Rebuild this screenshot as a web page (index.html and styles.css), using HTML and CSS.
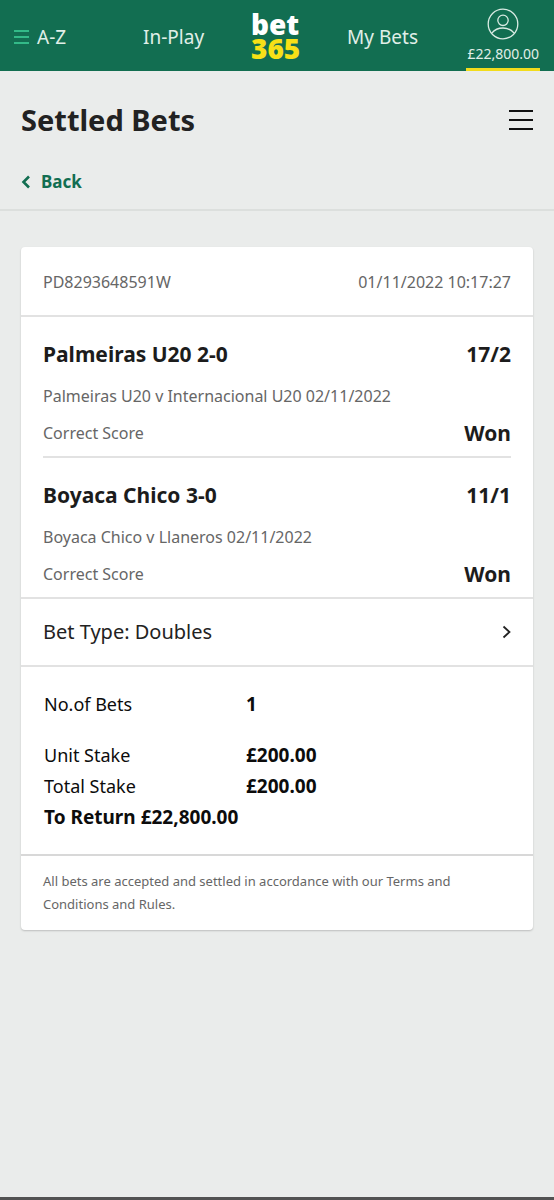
FILE: index.html
```html
<!DOCTYPE html>
<html lang="en">
<head>
    <meta charset="UTF-8">
    <meta name="viewport" content="width=device-width, initial-scale=1.0">
    <title>Settled Bets</title>
    <link rel="stylesheet" href="styles.css">
</head>
<body>
    <header class="header">
        <nav class="nav">
            <a href="#" class="nav-link nav-az">
                <svg width="15" height="14" viewBox="0 0 15 14" stroke="#3fd39b" stroke-width="1.4" aria-hidden="true">
                    <path d="M0 1h15M0 7h15M0 13h15"/>
                </svg>
                A-Z
            </a>
            <a href="#" class="nav-link nav-play">In-Play</a>
            <a href="#" class="logo"><span class="logo-bet">bet</span><span class="logo-365">365</span></a>
            <a href="#" class="nav-link nav-bets">My Bets</a>
        </nav>
        <a href="#" class="account">
            <svg width="32" height="32" viewBox="0 0 32 32" fill="none" stroke="#d9ebe3" stroke-width="1.3" aria-hidden="true">
                <circle cx="16" cy="16" r="14.8"/>
                <circle cx="16" cy="12.3" r="5.2"/>
                <path d="M4.8 25.2C7.5 21.8 11.5 20 16 20s8.5 1.8 11.2 5.2"/>
            </svg>
            <span>£22,800.00</span>
        </a>
    </header>

    <section class="page-head">
        <div class="title-row">
            <h1>Settled Bets</h1>
            <button class="menu-button" aria-label="Menu">
                <svg width="24" height="22" viewBox="0 0 24 22" stroke="#111" stroke-width="2" aria-hidden="true">
                    <path d="M0 2h24M0 11h24M0 20h24"/>
                </svg>
            </button>
        </div>
        <a href="#" class="back">
            <svg width="10" height="14" viewBox="0 0 10 14" fill="none" stroke="#126e51" stroke-width="2.6" aria-hidden="true">
                <path d="M8 1.5L2.5 7 8 12.5"/>
            </svg>
            Back
        </a>
    </section>

    <main class="slip">
        <div class="slip-head">
            <span>PD8293648591W</span>
            <span>01/11/2022 10:17:27</span>
        </div>

        <div class="selections">
            <div class="selection">
                <div class="row"><h2>Palmeiras U20 2-0</h2><strong>17/2</strong></div>
                <p>Palmeiras U20 v Internacional U20 02/11/2022</p>
                <div class="row"><span>Correct Score</span><strong>Won</strong></div>
            </div>
            <div class="selection">
                <div class="row"><h2>Boyaca Chico 3-0</h2><strong>11/1</strong></div>
                <p>Boyaca Chico v Llaneros 02/11/2022</p>
                <div class="row"><span>Correct Score</span><strong>Won</strong></div>
            </div>
        </div>

        <button class="bet-type">
            Bet Type: Doubles
            <svg width="9" height="14" viewBox="0 0 9 14" fill="none" stroke="#222" stroke-width="1.8" aria-hidden="true">
                <path d="M1.5 1.5L7.5 7l-6 5.5"/>
            </svg>
        </button>

        <table class="totals">
            <tr class="bet-count"><th scope="row">No.of Bets</th><td>1</td></tr>
            <tr><th scope="row">Unit Stake</th><td>£200.00</td></tr>
            <tr><th scope="row">Total Stake</th><td>£200.00</td></tr>
            <tr><td colspan="2">To Return £22,800.00</td></tr>
        </table>

        <p class="terms">All bets are accepted and settled in accordance with our Terms and Conditions and Rules.</p>
    </main>

    <footer class="bottom-bar"></footer>
</body>
</html>
```

FILE: styles.css
```css
* {
    box-sizing: border-box;
}
body {
    display: flex;
    flex-direction: column;
    min-height: 100vh;
    margin: 0;
    background: #eaeceb;
    color: #222;
    font-family: 'Noto Sans', sans-serif;
    font-size: 16px;
    line-height: 24px;
}
h1, h2, p {
    margin: 0;
}
a {
    color: inherit;
    text-decoration: none;
}
button {
    padding: 0;
    border: none;
    background: none;
    color: inherit;
    font: inherit;
    cursor: pointer;
}
svg {
    display: block;
    flex: none;
}
.header {
    display: flex;
    justify-content: space-between;
    height: 71px;
    padding: 0 14px;
    background: #126e51;
    color: #e0efe8;
}
.nav {
    display: flex;
    flex: 1;
    align-items: center;
    justify-content: space-between;
    max-width: 404px;
}
.nav-link {
    display: flex;
    align-items: center;
    gap: 8px;
    padding-top: 2px;
    font-size: 19px;
}
.nav-play {
    margin-left: 30px;
}
.logo {
    display: flex;
    flex-direction: column;
    font-size: 28px;
    font-weight: 900;
    line-height: 24px;
}
.logo-bet {
    color: #fff;
}
.logo-365 {
    color: #f7e017;
}
.account {
    display: flex;
    flex-direction: column;
    align-items: center;
    padding: 8px 1px 0;
    border-bottom: 3px solid #f2dc1c;
    font-size: 14px;
    line-height: 28px;
}
.page-head {
    padding: 30px 21px 15px;
    border-bottom: 2px solid #dcdfdd;
}
.title-row {
    display: flex;
    align-items: center;
    justify-content: space-between;
    margin-bottom: 31px;
}
h1 {
    font-size: 29px;
    line-height: 38px;
}
.back {
    display: flex;
    align-items: center;
    gap: 10px;
    width: max-content;
    color: #126e51;
    font-size: 17px;
    font-weight: 700;
}
.slip {
    margin: 36px 21px;
    border-radius: 4px;
    background: #fff;
    box-shadow: 0 1px 2px rgba(0,0,0,0.2);
}
.slip-head {
    display: flex;
    justify-content: space-between;
    padding: 23px 22px 21px;
    border-bottom: 2px solid #e2e2e2;
    color: #666;
}
.selections {
    padding: 0 22px;
    border-bottom: 2px solid #e2e2e2;
    color: #666;
}
.selection {
    padding: 21px 0 7px;
}
.selection + .selection {
    border-top: 2px solid #e2e2e2;
}
.row {
    display: flex;
    align-items: center;
    justify-content: space-between;
    line-height: 32px;
}
.selection p {
    margin: 14px 0 9px;
}
.row h2, .row strong {
    color: #1c1c1c;
    font-size: 21px;
}
.bet-type {
    display: flex;
    align-items: center;
    justify-content: space-between;
    width: 100%;
    padding: 21px 22px;
    border-bottom: 2px solid #e2e2e2;
    font-size: 20px;
}
.totals {
    width: 100%;
    padding: 22px 23px 21px;
    border-spacing: 0;
    color: #0c0c0c;
    font-size: 18px;
    line-height: 31px;
}
.totals th, .totals td {
    padding: 0;
    text-align: left;
}
.totals th {
    width: 202px;
    font-weight: 400;
}
.totals td {
    font-size: 19px;
    font-weight: 700;
}
.totals .bet-count th, .totals .bet-count td {
    padding-bottom: 20px;
}
.terms {
    padding: 14px 22px;
    border-top: 2px solid #d8d8d8;
    color: #666;
    font-size: 13px;
    line-height: 23px;
}
.bottom-bar {
    height: 3px;
    margin-top: auto;
    background: #525252;
}
```
